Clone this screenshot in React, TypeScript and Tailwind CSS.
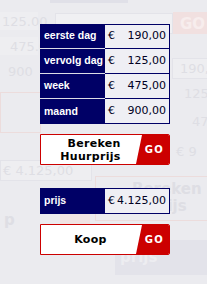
import React from "react";

const labelCls =
  "w-[65px] bg-[#000066] flex items-center pl-[4px] text-white font-bold text-[10.5px] whitespace-nowrap [font-family:'Liberation_Sans',Arial,sans-serif]";
const valueCls =
  "flex-1 bg-[#efeff4] border-b border-r border-[#000066] flex items-center justify-between pl-[3px] pr-[3px] text-[11px] text-[#000022] whitespace-nowrap [font-family:'DejaVu_Sans',Verdana,sans-serif]";

function Row({ label, value, first, last }: { label: string; value: string; first?: boolean; last?: boolean }) {
  return (
    <div className="flex h-[25px]">
      <div className={labelCls + (last ? "" : " border-b border-[#dcdce6]")}>{label}</div>
      <div className={valueCls + (first ? " border-t" : "")}>
        <span>€</span>
        <span>{value}</span>
      </div>
    </div>
  );
}

function GoButton({ children, align }: { children: React.ReactNode; align: "right" | "center" }) {
  return (
    <div className="flex h-[31px] w-[130px] border border-[#cc0000] bg-white rounded-r-[2px] overflow-hidden">
      <div className="flex-1 flex items-center justify-center pl-[4px] text-black font-bold text-[11px] leading-[13px] tracking-[0.3px] [font-family:'DejaVu_Sans',Verdana,sans-serif]">
        <div className={align === "right" ? "text-right" : "text-center"}>{children}</div>
      </div>
      <div className="w-[33px] bg-[#cc0000] flex items-center justify-center pl-[4px] text-white font-bold text-[10px] tracking-[1.5px] [clip-path:polygon(6px_0,100%_0,100%_100%,0_100%)] [font-family:'DejaVu_Sans',Verdana,sans-serif]">
        GO
      </div>
    </div>
  );
}

function Watermark() {
  const t = { fill: "#dedee4", fontFamily: "DejaVu Sans, Verdana, sans-serif", fontSize: 13 };
  const tb = { ...t, fontWeight: 700, fontSize: 15 };
  return (
    <svg className="absolute inset-0" width="207" height="284" viewBox="0 0 207 284">
      <rect x="50" y="0" width="78" height="3" fill="#e0e0e8" />
      <rect x="55.5" y="13.5" width="117" height="20" fill="#f0f0f3" stroke="#e3e3e9" />
      <rect x="173" y="12" width="40" height="22" fill="#f1e0e0" />
      <text x="180" y="29" {...tb} fill="#f7eded">GO</text>
      <rect x="0" y="12" width="38" height="18" fill="#eeeef1" />
      <text x="2" y="26" {...t}>125.00</text>
      <rect x="0" y="37" width="38" height="18" fill="#eeeef1" />
      <text x="10" y="51" {...t}>475.00</text>
      <text x="8" y="76" {...t}>900</text>
      <rect x="172.5" y="58.5" width="40" height="20" fill="#eeeef1" stroke="#e3e3e9" />
      <text x="180" y="73" {...t}>190,0</text>
      <text x="184" y="98" {...t}>125</text>
      <text x="192" y="126" {...t}>47</text>
      <text x="176" y="156" {...t}>€ 9</text>
      <rect x="0.5" y="92.5" width="40" height="40" fill="none" stroke="#ecdcdc" />
      <rect x="0.5" y="160.5" width="91" height="20" fill="#eeeef1" stroke="#e3e3e9" />
      <text x="3" y="175" {...t}>€ 4.125,00</text>
      <rect x="95.5" y="176.5" width="120" height="44" fill="none" stroke="#ecdcdc" />
      <text x="132" y="194" {...tb}>Bereken</text>
      <text x="160" y="211" {...tb}>rijs</text>
      <rect x="60" y="208" width="30" height="18" fill="#f0e3e3" />
      <text x="4" y="225" {...tb}>p</text>
      <rect x="115" y="240" width="100" height="35" fill="#e3e3ea" />
      <text x="120" y="262" {...tb} fill="#ededf1">prijs</text>
    </svg>
  );
}

export default function App() {
  return (
    <div className="relative w-[207px] h-[284px] bg-[#ebebef] overflow-hidden">
      <Watermark />
      <div className="relative flex flex-col w-[130px] ml-[40px] pt-[24px]">
        <div className="flex flex-col">
          <Row label="eerste dag" value="190,00" first />
          <Row label="vervolg dag" value="125,00" />
          <Row label="week" value="475,00" />
          <Row label="maand" value="900,00" last />
        </div>
        <div className="mt-[10px]">
          <GoButton align="right">
            Bereken
            <br />
            Huurprijs
          </GoButton>
        </div>
        <div className="mt-[23px] flex h-[26px]">
          <div className={labelCls}>prijs</div>
          <div className={valueCls + " border-t"}>
            <span>€</span>
            <span>4.125,00</span>
          </div>
        </div>
        <div className="mt-[10px]">
          <GoButton align="center">Koop</GoButton>
        </div>
      </div>
    </div>
  );
}
